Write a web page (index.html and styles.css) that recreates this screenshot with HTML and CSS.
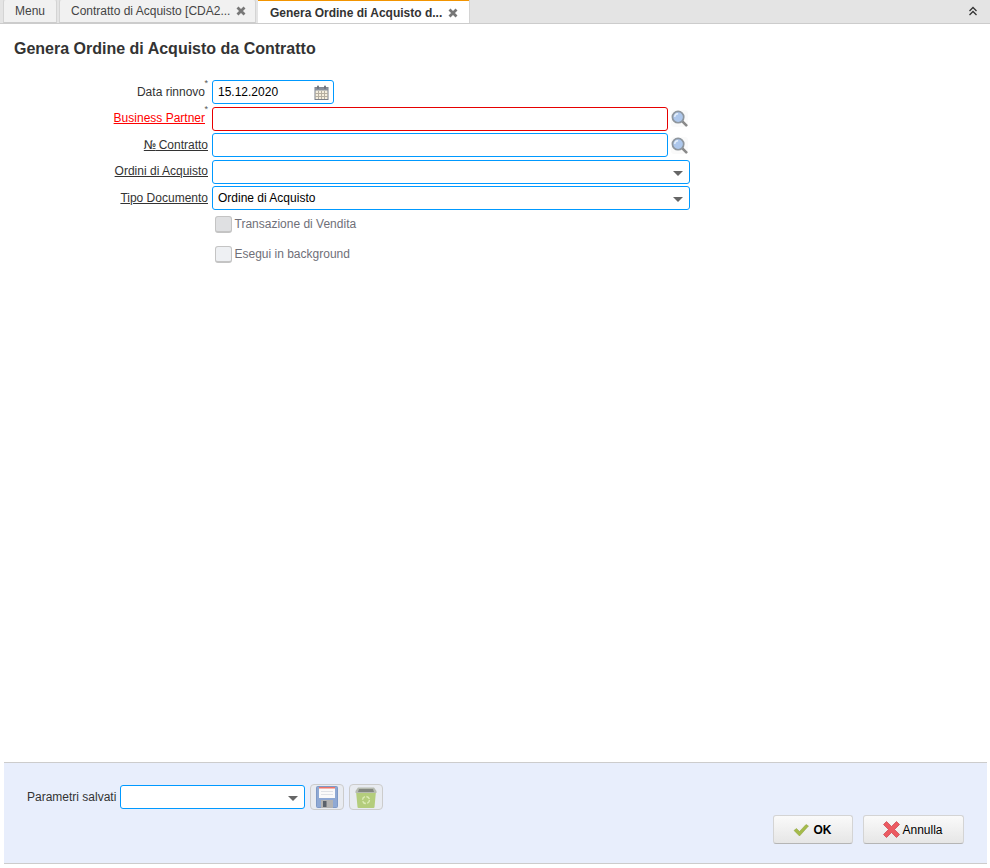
FILE: index.html
```html
<!DOCTYPE html>
<html lang="en">
<head>
    <meta charset="UTF-8">
    <title>Genera Ordine di Acquisto da Contratto</title>
    <link rel="stylesheet" href="styles.css">
</head>
<body>
    <div class="tabbar">
        <div class="tab tab-menu">Menu</div>
        <div class="tab tab-doc">
            <span class="tab-text">Contratto di Acquisto [CDA2...</span>
            <svg class="tab-close" viewBox="0 0 10 10"><path d="M1.500 1.500l7 7M8.500 1.500l-7 7"/></svg>
        </div>
        <div class="tab tab-active">
            <span class="tab-text">Genera Ordine di Acquisto d...</span>
            <svg class="tab-close" viewBox="0 0 10 10"><path d="M1.500 1.500l7 7M8.500 1.500l-7 7"/></svg>
        </div>
        <svg class="collapse" viewBox="0 0 10 10"><path d="M1.500 5L5 1.500 8.500 5M1.500 9L5 5.500 8.500 9"/></svg>
    </div>

    <h1 class="title">Genera Ordine di Acquisto da Contratto</h1>

    <div class="form">
        <label class="label required">Data rinnovo</label>
        <div class="field field-date">
            <span class="value">15.12.2020</span>
            <svg class="cal" viewBox="0 0 15 15">
                <rect x="1" y="2.500" width="13" height="12" fill="#f5eedd" stroke="#7b808a"/>
                <rect x="1" y="2.500" width="13" height="3" fill="#8a909b"/>
                <path d="M4.500 6v8M7.500 6v8M10.500 6v8M1 8.500h13M1 11.500h13" stroke="#b5aea0" stroke-width="1"/>
                <rect x="3" y="0.500" width="2" height="3.500" rx="1" fill="#6d727c"/>
                <rect x="10" y="0.500" width="2" height="3.500" rx="1" fill="#6d727c"/>
            </svg>
        </div>

        <label class="label required mandatory"><u>Business Partner</u></label>
        <div class="lookup-row">
            <div class="field field-error"></div>
            <svg class="lens" viewBox="0 0 18 18">
                <path d="M12 12l4.500 4.500" stroke="#8a8a8a" stroke-width="2.800" stroke-linecap="round"/>
                <circle cx="7.500" cy="7.500" r="6" fill="#adc7ec" stroke="#8e969e" stroke-width="1.800"/>
                <path d="M4 7.500a3.500 3.500 0 0 1 3.500-3.500" fill="none" stroke="#e6effa" stroke-width="1.500"/>
            </svg>
        </div>

        <label class="label"><u><span class="num">№</span> Contratto</u></label>
        <div class="lookup-row">
            <div class="field"></div>
            <svg class="lens" viewBox="0 0 18 18">
                <path d="M12 12l4.500 4.500" stroke="#8a8a8a" stroke-width="2.800" stroke-linecap="round"/>
                <circle cx="7.500" cy="7.500" r="6" fill="#adc7ec" stroke="#8e969e" stroke-width="1.800"/>
                <path d="M4 7.500a3.500 3.500 0 0 1 3.500-3.500" fill="none" stroke="#e6effa" stroke-width="1.500"/>
            </svg>
        </div>

        <label class="label"><u>Ordini di Acquisto</u></label>
        <div class="field field-select"><span class="arrow"></span></div>

        <label class="label"><u>Tipo Documento</u></label>
        <div class="field field-select">
            <span class="value">Ordine di Acquisto</span>
            <span class="arrow"></span>
        </div>
    </div>

    <div class="checks">
        <div class="check">
            <span class="box box-disabled"></span>
            <span>Transazione di Vendita</span>
        </div>
        <div class="check">
            <span class="box"></span>
            <span>Esegui in background</span>
        </div>
    </div>

    <div class="footer">
        <div class="saved">
            <span class="saved-label">Parametri salvati</span>
            <div class="field field-saved"><span class="arrow"></span></div>
            <button class="icon-btn">
                <svg viewBox="0 0 22 22" width="22" height="22">
                    <rect x="0.500" y="0.500" width="21" height="21" rx="1" fill="#8fa9d4" stroke="#7e99c6"/>
                    <rect x="3" y="1" width="16" height="11" fill="#fafafa"/>
                    <rect x="3" y="1" width="16" height="1.500" fill="#ee7468"/>
                    <path d="M5 5.500h12M5 8.500h12" stroke="#dfe2e7"/>
                    <rect x="5" y="14" width="12" height="8" fill="#b3b3b3"/>
                    <rect x="7" y="15" width="3.500" height="6" fill="#5a616b"/>
                </svg>
            </button>
            <button class="icon-btn">
                <svg viewBox="0 0 22 22" width="22" height="22">
                    <path d="M1 5h20l-1.500 16a1 1 0 0 1-1 1h-15a1 1 0 0 1-1-1z" fill="#b4cd7c"/>
                    <path d="M3 1.500h16l2.500 3.500v2H.5V5z" fill="#b6bbb0"/>
                    <path d="M4 3h14l1 3H3z" fill="#83877f"/>
                    <circle cx="11" cy="14" r="3.500" fill="none" stroke="#dcebb6" stroke-width="1.400" stroke-dasharray="4 1.500"/>
                </svg>
            </button>
        </div>
        <div class="actions">
            <button class="btn btn-ok">
                <svg viewBox="0 0 16 14" width="16" height="14"><path d="M1 7.500l2.500-2 3 3L13 1.500l2.500 1.500-9 10z" fill="#a5bb4a" stroke="#8b9e3c" stroke-width="0.500"/></svg>
                <span>OK</span>
            </button>
            <button class="btn btn-cancel">
                <svg viewBox="0 0 17 17" width="17" height="17"><path d="M3.500 0.500L8.500 5.500 13.500 0.500 16.500 3.500 11.500 8.500 16.500 13.500 13.500 16.500 8.500 11.500 3.500 16.500 0.500 13.500 5.500 8.500 0.500 3.500z" fill="#ec5a62" stroke="#c8414a" stroke-width="0.700"/></svg>
                <span>Annulla</span>
            </button>
        </div>
    </div>
</body>
</html>
```

FILE: styles.css
```css
* {
    box-sizing: border-box;
}
html, body {
    height: 100%;
}
body {
    margin: 0;
    display: flex;
    flex-direction: column;
    font-family: "Liberation Sans", Arial, sans-serif;
    font-size: 12px;
    color: #333;
    background: #fff;
}
.tabbar {
    display: flex;
    flex: none;
    align-items: flex-end;
    height: 24px;
    padding-left: 3px;
    background: #e4e4e4;
    border-bottom: 1px solid #ccc;
    position: relative;
}
.tab {
    display: flex;
    align-items: center;
    height: 24px;
    margin-right: 2px;
    background: #f1f1f1;
    border: 1px solid #d4d4d4;
    border-top-color: #e4e4e4;
    border-bottom-color: #ccc;
    border-radius: 3px 3px 0 0;
    color: #444;
}
.tab-menu {
    width: 54px;
    padding-left: 11px;
}
.tab-doc {
    width: 197px;
    padding-left: 11px;
}
.tab-doc .tab-close {
    margin-left: 6px;
}
.tab-active {
    width: 211px;
    height: 24px;
    margin-right: 0;
    padding-left: 12px;
    padding-top: 2px;
    background: #fff;
    border: 0;
    border-top: 2px solid #f29400;
    border-radius: 0;
    font-weight: bold;
    color: #333;
    box-shadow: 1px 0 0 #d4d4d4;
}
.tab-active .tab-close {
    margin-left: 6px;
}
.tab-close {
    width: 10px;
    height: 10px;
    fill: none;
    stroke: #777;
    stroke-width: 2.800;
}
.collapse {
    position: absolute;
    right: 12px;
    top: 6px;
    width: 10px;
    height: 10px;
    fill: none;
    stroke: #333;
    stroke-width: 1.300;
}
.title {
    flex: none;
    margin: 16px 0 0 14px;
    height: 40px;
    font-size: 16px;
    line-height: 18px;
    font-weight: bold;
    color: #333;
}
.form {
    flex: none;
    display: grid;
    grid-template-columns: 208px 478px;
    grid-auto-rows: 26.500px;
    column-gap: 4px;
}
.label {
    display: flex;
    justify-content: flex-end;
    align-items: center;
    height: 24px;
    margin-top: -0.300px;
    color: #333;
}
.num {
    font-family: "DejaVu Sans", sans-serif;
    font-size: 12px;
    letter-spacing: -1px;
}
.required {
    padding-right: 3px;
    position: relative;
}
.required::after {
    content: "*";
    position: absolute;
    right: 0;
    top: -2px;
    font-size: 9px;
    color: #555;
}
.mandatory {
    color: #f00;
}
.field {
    display: flex;
    align-items: center;
    height: 24px;
    padding: 0 5px;
    background: #fff;
    border: 1px solid #0099ff;
    border-radius: 3px;
    color: #000;
    position: relative;
    flex: 1;
}
.field-date {
    width: 122px;
    flex: none;
}
.field-error {
    border-color: #e60000;
}
.lookup-row {
    display: flex;
    align-items: center;
    height: 24px;
    gap: 3px;
}
.lens {
    flex: none;
    width: 17px;
    height: 17px;
    margin-right: 2px;
    background: #fafafa;
    border-radius: 3px;
}
.cal {
    position: absolute;
    right: 4px;
    top: 4px;
    width: 15px;
    height: 15px;
}
.arrow {
    position: absolute;
    right: 6px;
    top: 10px;
    width: 0;
    height: 0;
    border-left: 5.500px solid transparent;
    border-right: 5.500px solid transparent;
    border-top: 5.500px solid #666;
}
.checks {
    flex: none;
    margin: 0 0 0 215px;
    padding-top: 3px;
}
.check {
    display: flex;
    align-items: center;
    height: 17px;
    gap: 2.500px;
    margin-bottom: 13px;
    color: #6f6f78;
}
.box {
    display: block;
    width: 17px;
    height: 17px;
    background: #eef0f3;
    border: 1px solid #c4c4c4;
    border-bottom-width: 2px;
    border-radius: 3px;
}
.box-disabled {
    background: #dfe0e2;
}
.footer {
    margin: auto 3px 4px 4px;
    flex: none;
    height: 102px;
    padding: 21px 23px 0 23px;
    background: #e8eefc;
    border-top: 1px solid #ccc;
    border-bottom: 1px solid #ccc;
}
.saved {
    display: flex;
    align-items: center;
    height: 26px;
}
.saved-label {
    margin-right: 4px;
    color: #333;
}
.field-saved {
    flex: none;
    width: 185px;
}
.icon-btn {
    display: flex;
    align-items: center;
    justify-content: center;
    width: 34px;
    height: 26px;
    margin-left: 5px;
    padding: 0;
    background: #e8ebf1;
    border: 1px solid #ccc;
    border-radius: 4px;
}
.actions {
    display: flex;
    justify-content: flex-end;
    gap: 10px;
    margin-top: 5px;
}
.btn {
    display: flex;
    align-items: center;
    justify-content: center;
    height: 29px;
    padding: 0;
    background: linear-gradient(#fafafa, #e6e6e6);
    border: 1px solid #d4d4d4;
    border-bottom: 1px solid #b5b5b5;
    border-radius: 3px;
    font-family: "Liberation Sans", Arial, sans-serif;
    font-size: 12px;
    color: #000;
}
.btn-ok {
    width: 80px;
    gap: 5px;
    font-weight: bold;
    padding-right: 2px;
}
.btn-cancel {
    width: 101px;
    gap: 2px;
    padding-right: 1px;
}
```
